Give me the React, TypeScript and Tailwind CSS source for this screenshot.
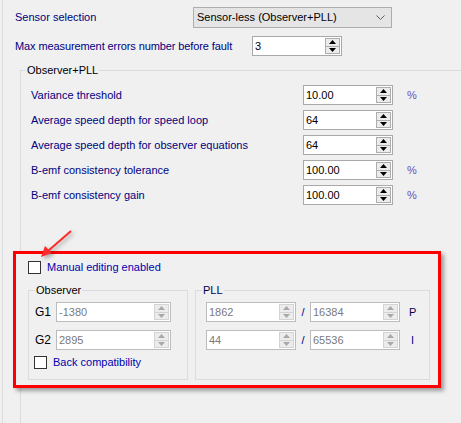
import React from "react";

const label = "text-[#000080]";

function Arrows({ disabled }: { disabled?: boolean }) {
  const fill = disabled ? "#a8a8a8" : "#000000";
  const edge = disabled ? "border-[#d4d4d4]" : "border-[#adadad]";
  return (
    <div className={`w-[15px] my-[1px] mr-[1px] flex flex-col border ${edge} bg-[#ececec]`}>
      <div className="flex-1 flex items-center justify-center">
        <svg width="7" height="4" viewBox="0 0 7 4">
          <polygon points="3.5,0 7,4 0,4" fill={fill} />
        </svg>
      </div>
      <div className={`flex-1 flex items-center justify-center border-t ${edge}`}>
        <svg width="7" height="4" viewBox="0 0 7 4">
          <polygon points="0,0 7,0 3.5,4" fill={fill} />
        </svg>
      </div>
    </div>
  );
}

function Spin({ value, w, disabled }: { value: string; w: string; disabled?: boolean }) {
  return (
    <div
      className={`${w} h-[20px] flex bg-white border ${
        disabled ? "border-[#bcbcbc] text-[#7a7a7a]" : "border-[#a9a9a9] text-black"
      }`}
    >
      <div className="flex-1 pl-[2px] flex items-center leading-none">{value}</div>
      <Arrows disabled={disabled} />
    </div>
  );
}

function Check() {
  return <div className="w-[13px] h-[13px] border border-[#333333] bg-white shrink-0" />;
}

const rows = [
  { name: "Variance threshold", value: "10.00", pct: true },
  { name: "Average speed depth for speed loop", value: "64", pct: false },
  { name: "Average speed depth for observer equations", value: "64", pct: false },
  { name: "B-emf consistency tolerance", value: "100.00", pct: true },
  { name: "B-emf consistency gain", value: "100.00", pct: true },
];

export default function App() {
  return (
    <div className="w-[461px] h-[423px] bg-[#f0f0f0] relative overflow-hidden pl-[2px] font-['Liberation_Sans',Arial,sans-serif] text-[11px]">
      <div className="h-full border-l border-[#dcdcdc] pl-[12px] pt-[7px]">
        {/* sensor selection */}
        <div className="flex items-center h-[21px]">
          <div className={`w-[178px] ${label}`}>Sensor selection</div>
          <div className="w-[199px] h-[21px] bg-[#e5e5e5] border border-[#adadad] flex items-center pl-[3px] pr-[6px] text-black">
            <span className="flex-1">Sensor-less (Observer+PLL)</span>
            <svg width="9" height="6" viewBox="0 0 9 6">
              <polyline points="0.5,0.5 4.5,4.5 8.5,0.5" fill="none" stroke="#606060" strokeWidth="1" />
            </svg>
          </div>
        </div>

        <div className="flex items-center h-[20px] mt-[8px]">
          <div className={`w-[237px] ${label} tracking-[-0.1px]`}>Max measurement errors number before fault</div>
          <Spin value="3" w="w-[90px]" />
        </div>

        {/* Observer+PLL group */}
        <div className="relative mt-[14px] ml-[5px] h-[400px] border-l border-t border-[#dcdcdc] pl-[10px] pt-[14px]">
          <div className="absolute -top-[7px] left-[5px] px-[1px] bg-[#f0f0f0] text-black leading-[13px]">
            Observer+PLL
          </div>
          <div className="flex flex-col gap-[5px]">
            {rows.map((r) => (
              <div key={r.name} className="flex items-center h-[20px]">
                <div className={`w-[272px] ${label}`}>{r.name}</div>
                <Spin value={r.value} w="w-[90px]" />
                {r.pct && <div className="ml-[14px] text-[#6a4fb8]">%</div>}
              </div>
            ))}
          </div>

          {/* highlighted area */}
          <div className="mt-[46px] -ml-[18px] w-[428px] h-[137px] border-[3px] border-[#ff0000] bg-[#f0f0f0] shadow-[3px_3px_4px_rgba(0,0,0,0.35)] pl-[12px] pt-[7px]">
            <div className="flex items-center gap-[6px] h-[13px]">
              <Check />
              <span className="text-[#0000b0]">Manual editing enabled</span>
            </div>

            <div className="flex gap-[7px] mt-[16px]">
              <div className="relative w-[160px] h-[90px] border border-[#dcdcdc] pt-[11px]">
                <div className="absolute -top-[7px] left-[6px] px-[1px] bg-[#f0f0f0] text-black leading-[13px]">
                  Observer
                </div>
                <div className="flex items-center h-[20px] pl-[6px]">
                  <div className="w-[21px] text-black text-[12px]">G1</div>
                  <Spin value="-1380" w="w-[115px]" disabled />
                </div>
                <div className="flex items-center h-[20px] pl-[6px] mt-[8px]">
                  <div className="w-[21px] text-black text-[12px]">G2</div>
                  <Spin value="2895" w="w-[115px]" disabled />
                </div>
                <div className="flex items-center gap-[6px] h-[13px] pl-[5px] mt-[6px]">
                  <Check />
                  <span className="text-[#0000b0]">Back compatibility</span>
                </div>
              </div>

              <div className="relative w-[235px] h-[90px] border border-[#dcdcdc] pt-[11px] pl-[10px]">
                <div className="absolute -top-[7px] left-[6px] px-[1px] bg-[#f0f0f0] text-[#000050] leading-[13px]">
                  PLL
                </div>
                <div className="flex items-center h-[20px]">
                  <Spin value="1862" w="w-[90px]" disabled />
                  <div className="w-[14px] text-center text-[#000080]">/</div>
                  <Spin value="16384" w="w-[90px]" disabled />
                  <div className="ml-[9px] text-[#000050]">P</div>
                </div>
                <div className="flex items-center h-[20px] mt-[8px]">
                  <Spin value="44" w="w-[90px]" disabled />
                  <div className="w-[14px] text-center text-[#000080]">/</div>
                  <Spin value="65536" w="w-[90px]" disabled />
                  <div className="ml-[11px] text-[#000080]">I</div>
                </div>
              </div>
            </div>
          </div>
        </div>
      </div>

      {/* annotation arrow */}
      <svg
        className="absolute left-0 top-0 pointer-events-none"
        width="461"
        height="423"
        style={{ filter: "drop-shadow(2px 2px 2px rgba(0,0,0,0.35))" }}
      >
        <line x1="71" y1="231" x2="48" y2="251" stroke="#ff2a2a" strokeWidth="2" />
        <polygon points="41,257 45,246 52,253" fill="#ff2a2a" />
      </svg>
    </div>
  );
}
